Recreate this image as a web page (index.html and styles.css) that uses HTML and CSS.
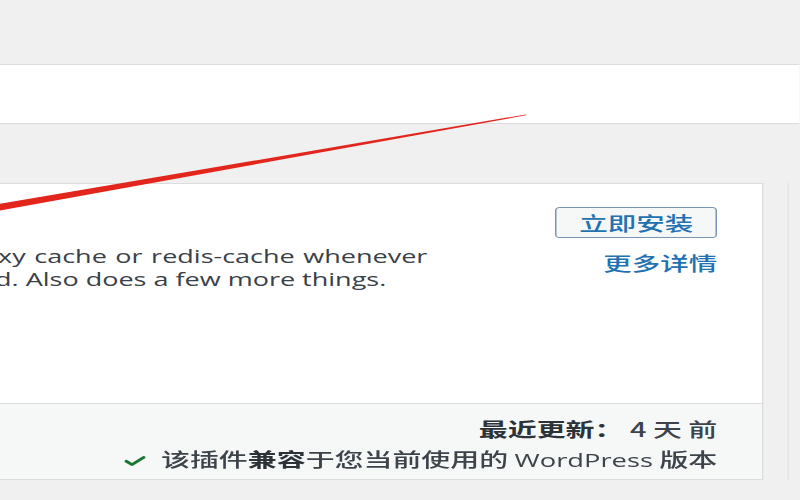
FILE: index.html
```html
<!DOCTYPE html>
<html lang="zh-CN">
<head>
<meta charset="utf-8">
<title>插件</title>
<link rel="stylesheet" href="styles.css">
</head>
<body>
<div class="page">
  <div class="topbar"></div>
  <div class="band"></div>
  <div class="cards">
    <div class="card">
      <div class="card-top">
        <div class="desc">
          <p><span class="l1">xy cache or redis-cache whenever</span><br>d. Also does a few more things.</p>
        </div>
        <div class="actions">
          <a class="btn">立即安装</a>
          <a class="more">更多详情</a>
        </div>
      </div>
      <div class="card-bottom">
        <div class="updated"><strong>最近更新：</strong> 4 天 前</div>
        <div class="compat"><span class="check"><svg viewBox="0 0 14 10" width="14" height="10"><path d="M1.2 5.2 L5 8.6 L12.8 1.4" fill="none" stroke="#17762f" stroke-width="2.6" stroke-linecap="round" stroke-linejoin="round"/></svg></span>该插件<strong>兼容</strong>于您当前使用的 <span class="en">WordPress</span> 版本</div>
      </div>
    </div>
    <div class="next"></div>
  </div>
</div>
<svg class="annot" viewBox="0 0 800 500" width="800" height="500">
  <polygon points="-2,204.2 526,114.4 526,115.3 -2,210.8" fill="#e2261c"/>
</svg>
</body>
</html>
```

FILE: styles.css
```css
html, body {
  margin: 0;
  padding: 0;
}
body {
  background: #f0f0f1;
  width: 800px;
  height: 500px;
  overflow: hidden;
  position: relative;
  font-family: "Open Sans", "Noto Sans CJK SC", sans-serif;
  color: #3c434a;
}
.page {
  width: 533.333px;
  transform: scaleX(1.5);
  transform-origin: 0 0;
}
.topbar {
  height: 64px;
}
.band {
  height: 58px;
  background: #fff;
  border-top: 1px solid #dcdcde;
  border-bottom: 1px solid #dcdcde;
}
.cards {
  display: flex;
  margin-top: 59px;
  margin-left: -40px;
}
.card {
  flex: 0 0 548.7px;
  box-sizing: border-box;
  background: #fff;
  border: 1px solid #dcdcde;
  height: 297px;
  display: flex;
  flex-direction: column;
}
.next {
  flex: 1;
  margin-left: 16px;
  height: 297px;
  border-left: 1px solid #e4e4e6;
}
.card-top {
  height: 219px;
  display: flex;
  box-sizing: border-box;
  padding: 23px 29.5px 0 35.7px;
}
.desc {
  flex: 1;
  padding-top: 38px;
}
.desc p {
  margin: 0;
  font-size: 18px;
  line-height: 23px;
  white-space: nowrap;
  color: #3a4047;
}
.l1 {
  margin-left: 2px;
  word-spacing: 1px;
}
.actions {
  display: flex;
  flex-direction: column;
  align-items: flex-end;
}
.btn {
  display: flex;
  align-items: center;
  justify-content: center;
  box-sizing: border-box;
  width: 108px;
  height: 31px;
  border: 1px solid #7896b3;
  border-radius: 3px;
  background: #f6f7f7;
  color: #2271b1;
  font-family: "Noto Sans CJK SC", sans-serif;
  font-size: 19px;
  font-weight: 500;
  line-height: 1;
}
.more {
  margin-top: 14px;
  color: #2271b1;
  font-family: "Noto Sans CJK SC", sans-serif;
  font-size: 19px;
  font-weight: 500;
  line-height: 22px;
}
.card-bottom {
  flex: 1;
  background: #f6f7f7;
  border-top: 1px solid #dcdcde;
  padding: 10px 29.5px 0 0;
  text-align: right;
  font-family: "Noto Sans CJK SC", sans-serif;
  font-size: 19.3px;
  font-weight: 500;
  line-height: 30px;
  color: #3c434a;
}
.card-bottom strong {
  font-weight: 700;
  color: #2c3338;
}
.en {
  font-family: "Open Sans", sans-serif;
  font-size: 18.2px;
  font-weight: 400;
}
.check {
  display: inline-block;
  margin-right: 10px;
  vertical-align: 1px;
}
.check svg {
  display: block;
}
.annot {
  position: absolute;
  left: 0;
  top: 0;
  pointer-events: none;
}
```
